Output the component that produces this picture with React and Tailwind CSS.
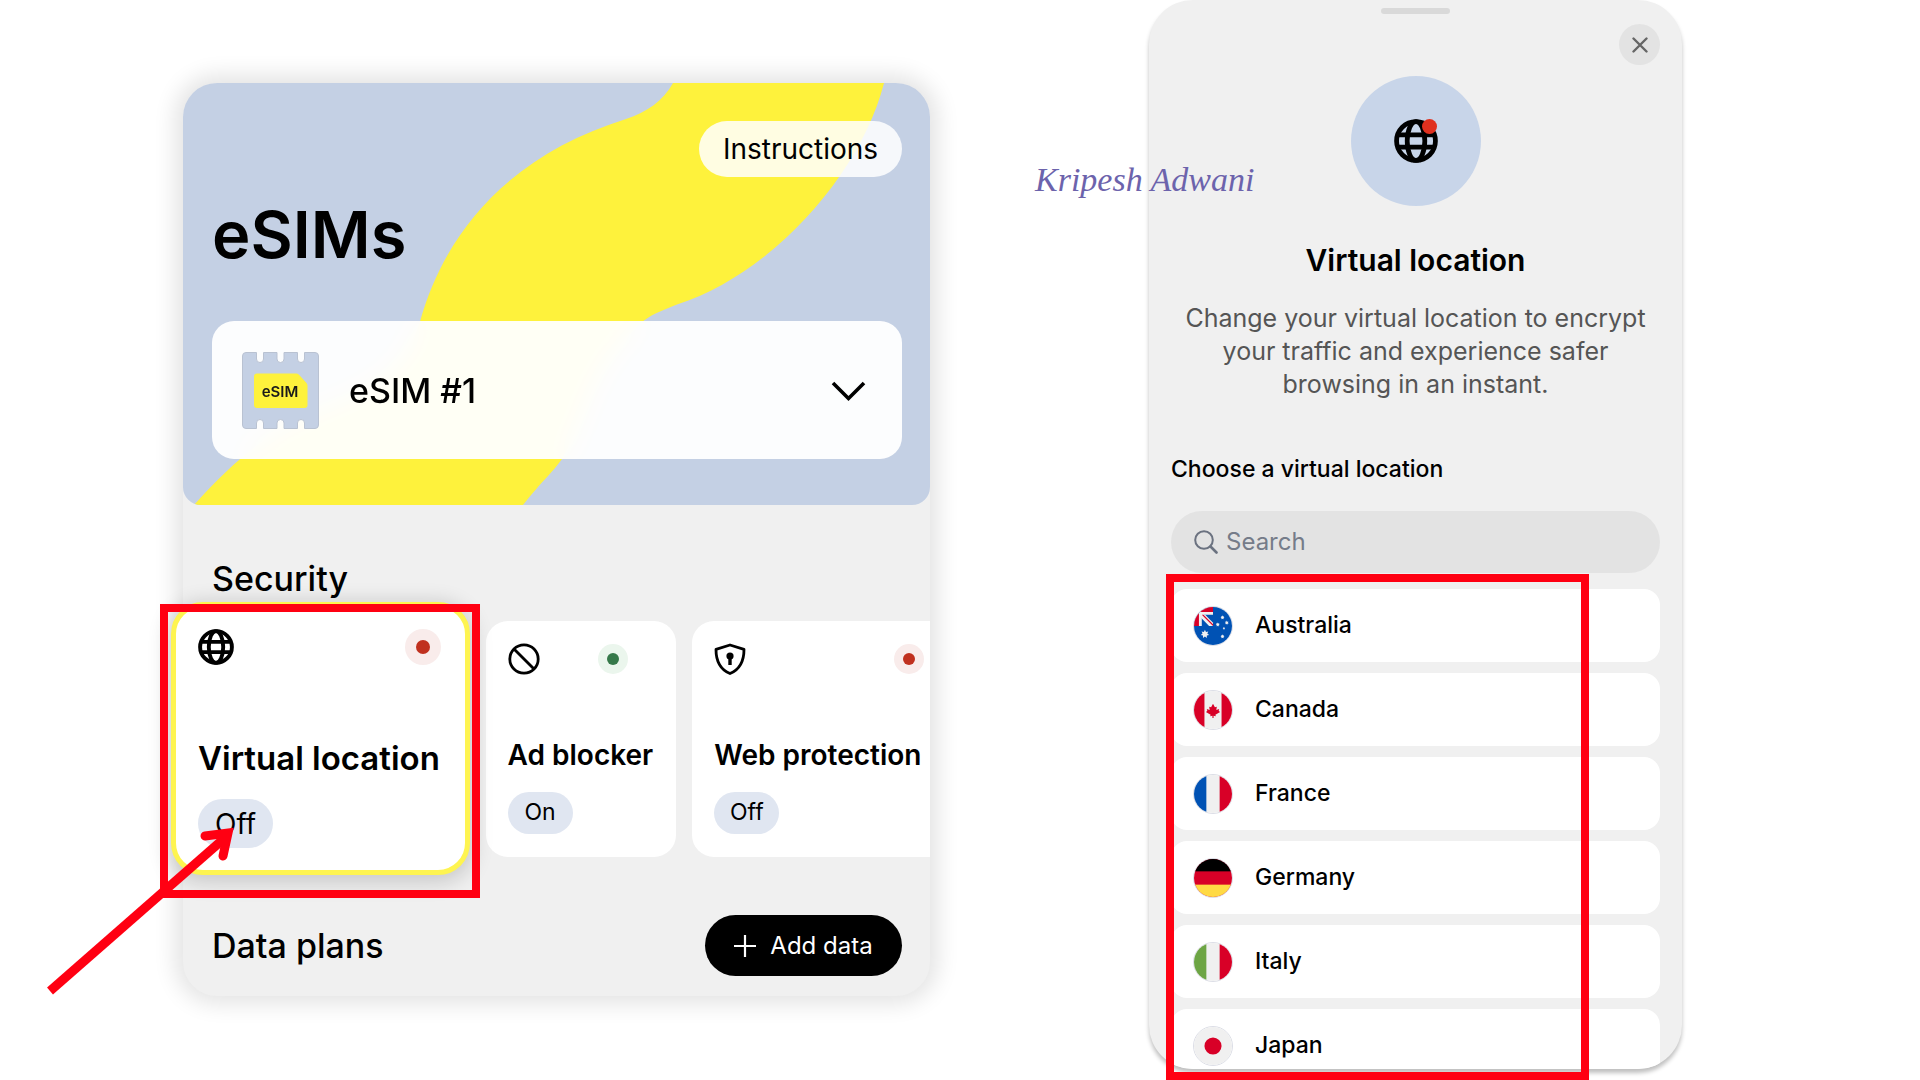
import { useState } from 'react';

const countries = ['Australia', 'Canada', 'France', 'Germany', 'Italy', 'Japan'];

const Globe = ({ className }) => (
  <svg viewBox="0 0 24 24" className={className} fill="none" stroke="currentColor" strokeWidth="2.6" aria-hidden="true">
    <circle cx="12" cy="12" r="10.6" />
    <ellipse cx="12" cy="12" rx="4.8" ry="10.6" />
    <path d="M2 8.6h20M2 15.4h20" />
  </svg>
);

const Blocked = ({ className }) => (
  <svg viewBox="0 0 32 32" className={className} fill="none" stroke="currentColor" strokeWidth="2.8" aria-hidden="true">
    <circle cx="16" cy="16" r="14.2" />
    <path d="M6 6l20 20" />
  </svg>
);

const Shield = ({ className }) => (
  <svg viewBox="0 0 32 32" className={className} fill="none" stroke="currentColor" strokeWidth="2.8" strokeLinejoin="round" aria-hidden="true">
    <path d="M16 2L30 6.4C30 17.5 25.5 26.5 16 30.5C6.5 26.5 2 17.5 2 6.4Z" />
    <circle cx="16" cy="13" r="3.6" fill="currentColor" stroke="none" />
    <path d="M16 13v9" strokeWidth="3.4" />
  </svg>
);

const EsimChip = () => (
  <svg viewBox="0 0 77 77" className="w-[77px] h-[77px] shrink-0" aria-hidden="true">
    <path
      d="M4 .5H14.5V7a3.5 3.5 0 0 0 7 0V.5H35V7a3.5 3.5 0 0 0 7 0V.5H55.5V7a3.5 3.5 0 0 0 7 0V.5H73a3.5 3.5 0 0 1 3.5 3.5V73a3.5 3.5 0 0 1-3.5 3.5H62.5V71a3.5 3.5 0 0 0-7 0v5.5H42V71a3.5 3.5 0 0 0-7 0v5.5H21.5V71a3.5 3.5 0 0 0-7 0v5.5H4A3.5 3.5 0 0 1 .5 73V4A3.5 3.5 0 0 1 4 .5Z"
      fill="#c4d0e4"
      stroke="#b9c2d2"
    />
    <path d="M15 21.5H54a4 4 0 0 1 3 1.3L64.5 31a4 4 0 0 1 1 3V53a3 3 0 0 1-3 3H15a3 3 0 0 1-3-3V24.5a3 3 0 0 1 3-3Z" fill="#fef23c" />
    <text x="38" y="45" textAnchor="middle" fontSize="15" fontWeight="600" fill="#1a1a1a">eSIM</text>
  </svg>
);

const Star = ({ x, y, r }) => (
  <path
    transform={`translate(${x} ${y}) scale(${r})`}
    d="M0-1L.25-.5.78-.62.56-.12.97.22.45.36.43.9 0 .58-.43.9-.45.36-.97.22-.56-.12-.78-.62-.25-.5Z"
    fill="#f0f0f0"
  />
);

const flags = {
  Australia: (
    <>
      <rect width="40" height="40" fill="#0052b4" />
      <rect width="20" height="20" fill="#f0f0f0" />
      <path d="M0 0H20V5.2H5.2V20H0Z" fill="#d80027" />
      <path d="M10.5 8.2H20V17.2Z M8.2 11.5V20H16Z" fill="#0052b4" />
      <path d="M8.2 8.2H11.8L20 16.5V20H16.2L8.2 12Z" fill="#f0f0f0" />
      <path d="M8.2 8.2H10L20 18.2V20Z" fill="#d80027" />
      <Star x={11.5} y={28.5} r={4.5} />
      <Star x={30} y={31} r={2.2} />
      <Star x={25} y={18.5} r={2.2} />
      <Star x={30} y={11} r={2.2} />
      <Star x={34.5} y={16.5} r={2.2} />
      <Star x={31.5} y={22.5} r={1.4} />
    </>
  ),
  Canada: (
    <>
      <rect width="40" height="40" fill="#f0f0f0" />
      <path d="M0 0H11V40H0ZM29 0H40V40H29Z" fill="#d80027" />
      <path d="M20 13.5L22 17 24 16.5 23.5 20 26.5 19 26 21 27.5 22 22.5 25 23 26.5 20.6 26V28.5H19.4V26L17 26.5 17.500 25 12.5 22 14 21 13.5 19 16.5 20 16 16.5 18 17Z" fill="#d80027" />
    </>
  ),
  France: (
    <>
      <rect width="40" height="40" fill="#f0f0f0" />
      <rect width="13" height="40" fill="#0052b4" />
      <rect x="27" width="13" height="40" fill="#d80027" />
    </>
  ),
  Germany: (
    <>
      <rect width="40" height="40" fill="#d80027" />
      <rect width="40" height="13" fill="#000" />
      <rect y="27" width="40" height="13" fill="#ffda44" />
    </>
  ),
  Italy: (
    <>
      <rect width="40" height="40" fill="#f0f0f0" />
      <rect width="13" height="40" fill="#6da544" />
      <rect x="27" width="13" height="40" fill="#d80027" />
    </>
  ),
  Japan: (
    <>
      <rect width="40" height="40" fill="#f0f0f0" />
      <circle cx="20" cy="20" r="9" fill="#d80027" />
    </>
  ),
};

const Flag = ({ country }) => (
  <span className="w-10 h-10 shrink-0 rounded-full border border-[#dcdee6] overflow-hidden">
    <svg viewBox="0 0 40 40" className="w-full h-full" aria-hidden="true">{flags[country]}</svg>
  </span>
);

const StatusDot = ({ on, large }) => (
  <span className={`flex items-center justify-center rounded-full ${large ? 'w-9 h-9' : 'w-[30px] h-[30px]'} ${on ? 'bg-[#ebf6ed]' : 'bg-[#f9eceb]'}`}>
    <span className={`rounded-full ${large ? 'w-3.5 h-3.5' : 'w-3 h-3'} ${on ? 'bg-[#36794a]' : 'bg-[#c0311f]'}`} />
  </span>
);

const SecurityTile = ({ icon, title, on, className, barClassName }) => (
  <article className={`min-w-0 bg-white py-[23px] pl-[22px] ${className}`}>
    <div className={`flex justify-between items-center h-[31px] ${barClassName}`}>
      {icon}
      <StatusDot on={on} />
    </div>
    <h3 className="mt-16 text-[28px] leading-8 font-semibold whitespace-nowrap">{title}</h3>
    <button className="mt-[21px] block w-[65px] h-[42px] rounded-full bg-[#e0e6f1] text-[23px]">{on ? 'On' : 'Off'}</button>
  </article>
);

const EsimCard = () => (
  <section className="mt-[83px] min-w-0 self-start rounded-[34px] bg-[#f0f0f0] pb-5 shadow-[0_0_22px_8px_rgba(0,0,0,0.11)]">
    <header className="relative overflow-hidden rounded-t-[34px] rounded-b-[18px] bg-[#c4d0e4] pl-[29px] pr-7 pt-[38px] pb-[46px]">
      <svg viewBox="0 0 747 421" preserveAspectRatio="none" className="absolute inset-0 w-full h-full" aria-hidden="true">
        <path
          d="M490 0C480 18 464 29 443 36C340 68 266 135 237 238C222 286 190 305 145 322C100 340 60 366 11 421H340C358 398 369 389 379 375C406 330 402 288 461 237C472 229 482 226 494 221C590 190 678 90 701 0Z"
          fill="#fef23c"
        />
      </svg>
      <div className="relative">
        <div className="flex justify-end">
          <button className="h-14 w-[203px] rounded-full bg-white/85 text-[28px]">Instructions</button>
        </div>
        <h1 className="mt-[18px] text-[65px] leading-[80px] font-semibold">eSIMs</h1>
        <button className="mt-[46px] flex h-[138px] w-full items-center rounded-[22px] bg-white/95 pl-[30px] pr-9 backdrop-blur-md">
          <EsimChip />
          <span className="ml-[30px] text-[34px] font-medium">eSIM #1</span>
          <svg viewBox="0 0 36 24" className="ml-auto w-9 h-6" fill="none" stroke="currentColor" strokeWidth="3.6" aria-hidden="true">
            <path d="M3 5L18.5 20.5L34 5" />
          </svg>
        </button>
      </div>
    </header>

    <h2 className="mt-14 px-[29px] text-[34px] leading-9 font-medium">Security</h2>

    <div className="relative -ml-3 mt-[5px] grid grid-cols-[299fr_191fr_238fr] items-center gap-4">
      <div className="relative z-10 min-w-0">
        <article className="rounded-[32px] border-[5px] border-[#fef450] bg-white pl-[22px] pr-6 pt-[22px] pb-[22px] shadow-[0_4px_20px_4px_rgba(0,0,0,0.16)]">
          <div className="flex items-center justify-between">
            <Globe className="w-9 h-9" />
            <StatusDot large />
          </div>
          <h3 className="mt-[77px] text-[33px] leading-8 font-semibold whitespace-nowrap">Virtual location</h3>
          <button className="mt-[25px] block h-[49px] w-[75px] rounded-full bg-[#e0e6f1] text-[28px]">Off</button>
        </article>

        {/* highlight frame and pointer */}
        <div className="pointer-events-none absolute -left-[11px] -right-[10px] top-0.5 -bottom-[23px] border-8 border-[#ff0012]" />
        <svg viewBox="0 0 200 180" className="pointer-events-none absolute -left-32 top-[220px] h-[180px] w-[200px]" fill="none" stroke="#ff0012" strokeWidth="9" aria-hidden="true">
          <path d="M7 169L184 14" />
          <path d="M162 14L185 11L180 34" strokeLinecap="round" strokeLinejoin="miter" />
        </svg>
      </div>
      <SecurityTile icon={<Blocked className="w-8 h-8" />} title="Ad blocker" on className="rounded-[22px] pr-5" barClassName="pr-7" />
      <SecurityTile icon={<Shield className="w-8 h-8" />} title="Web protection" className="rounded-l-[22px] pr-1.5" />
    </div>

    <div className="mt-10 flex items-center justify-between pl-[29px] pr-7">
      <h2 className="text-[34px] leading-9 font-medium">Data plans</h2>
      <button className="flex h-[61px] w-[197px] items-center justify-center gap-3.5 rounded-full bg-black text-[24px] text-white">
        <svg viewBox="0 0 22 22" className="w-[22px] h-[22px]" stroke="currentColor" strokeWidth="2.2" aria-hidden="true">
          <path d="M11 0V22M0 11H22" />
        </svg>
        Add data
      </button>
    </div>
  </section>
);

const LocationSheet = () => {
  const [query, setQuery] = useState('');
  const shown = countries.filter(c => c.toLowerCase().includes(query.toLowerCase()));

  return (
    <section className="relative min-w-0">
      <div className="h-[calc(100vh-11px)] overflow-hidden rounded-[44px] bg-[#f0f0f0] px-[22px] pt-2 shadow-[0_4px_4px_rgba(0,0,0,0.25)]">
        <div className="mx-auto h-1.5 w-[69px] rounded-full bg-[#d9d9d9]" />
        <div className="mt-2.5 flex justify-end">
          <button aria-label="Close" className="flex h-[41px] w-[41px] items-center justify-center rounded-full bg-[#e3e3e3] text-[#666]">
            <svg viewBox="0 0 16 16" className="h-4 w-4" stroke="currentColor" strokeWidth="2.4" strokeLinecap="round" aria-hidden="true">
              <path d="M1.5 1.5L14.5 14.5M14.5 1.5L1.5 14.5" />
            </svg>
          </button>
        </div>

        <div className="relative mx-auto mt-[11px] flex h-[130px] w-[130px] items-center justify-center rounded-full bg-[#c8d5e9]">
          <Globe className="h-11 w-11" />
          <span className="absolute right-[44px] top-[43px] h-[15px] w-[15px] rounded-full bg-[#e0301e]" />
        </div>

        <h2 className="mt-9 text-center text-[30px] leading-9 font-semibold">Virtual location</h2>
        <p className="mt-6 text-center text-[25px] leading-[33px] text-[#555]">
          Change your virtual location to encrypt
          <br />
          your traffic and experience safer
          <br />
          browsing in an instant.
        </p>

        <h3 className="mt-[52px] text-[23px] leading-8 font-medium">Choose a virtual location</h3>
        <label className="mt-[26px] flex h-[62px] items-center gap-2 rounded-full bg-[#e3e3e3] px-[23px] text-[#6b7280]">
          <svg viewBox="0 0 24 24" className="h-6 w-6 shrink-0" fill="none" stroke="currentColor" strokeWidth="2" strokeLinecap="round" aria-hidden="true">
            <circle cx="10" cy="10" r="8.8" />
            <path d="M16.5 16.5L22.5 22.5" strokeWidth="2.6" />
          </svg>
          <input
            type="text"
            aria-label="Search"
            placeholder="Search"
            value={query}
            onChange={e => setQuery(e.target.value)}
            className="min-w-0 flex-1 bg-transparent text-[24px] outline-none placeholder:text-[#757c89]"
          />
        </label>

        <ul className="mt-4 flex flex-col gap-[11px]">
          {shown.map(country => (
            <li key={country}>
              <button className="flex h-[73px] w-full items-center gap-[22px] rounded-2xl bg-white px-[22px] text-[23px] font-medium">
                <Flag country={country} />
                {country}
              </button>
            </li>
          ))}
        </ul>
      </div>

      {/* highlight frame */}
      <div className="pointer-events-none absolute left-[17px] right-[93px] top-[574px] bottom-0 border-8 border-[#ff0012]" />
      <p className="absolute -left-[114px] top-[156px] whitespace-nowrap font-['Liberation_Serif',cursive] text-[34px] leading-[48px] italic text-[#6c63ac]">
        Kripesh Adwani
      </p>
    </section>
  );
};

const App = () => (
  <main className="grid min-h-screen grid-cols-[183fr_747fr_219fr_533fr_238fr] overflow-hidden bg-white font-['Inter',sans-serif] text-black">
    <div />
    <EsimCard />
    <div />
    <LocationSheet />
    <div />
  </main>
);

export default App;
